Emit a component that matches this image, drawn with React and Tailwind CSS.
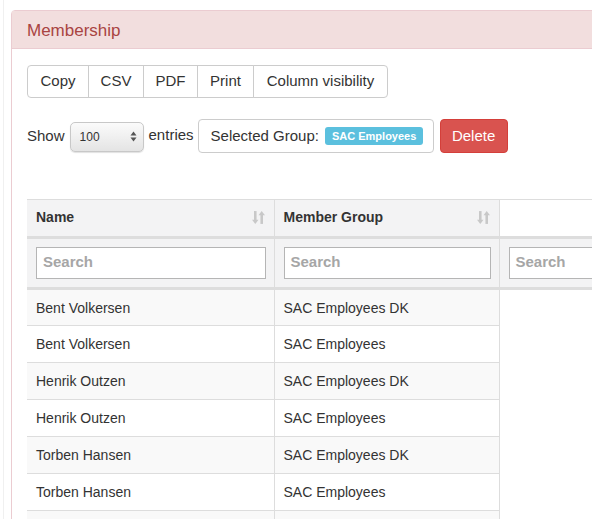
import React from "react";

const rows = [
  ["Bent Volkersen", "SAC Employees DK"],
  ["Bent Volkersen", "SAC Employees"],
  ["Henrik Outzen", "SAC Employees DK"],
  ["Henrik Outzen", "SAC Employees"],
  ["Torben Hansen", "SAC Employees DK"],
  ["Torben Hansen", "SAC Employees"],
  ["", ""],
];

function SortIcon() {
  return (
    <svg width="13" height="15" viewBox="0 0 12 14" className="text-[#c8c8c8]">
      <path d="M3 1v10" stroke="currentColor" strokeWidth="2.4" />
      <path d="M0 9l3 4 3-4z" fill="currentColor" />
      <path d="M9 13V3" stroke="currentColor" strokeWidth="2.4" />
      <path d="M6 5l3-4 3 4z" fill="currentColor" />
    </svg>
  );
}

function SearchBox({ className = "" }) {
  return (
    <div className={`flex h-[32px] items-center border border-[#b5b5b5] bg-white px-[6px] text-[15px] font-bold text-[#a6a6a6] ${className}`}>
      Search
    </div>
  );
}

export default function App() {
  const buttons = [
    ["Copy", "w-[62px]"],
    ["CSV", "w-[56px]"],
    ["PDF", "w-[55px]"],
    ["Print", "w-[57px]"],
    ["Column visibility", "w-[135px]"],
  ];

  return (
    <div className="relative h-[519px] w-[592px] overflow-hidden bg-white font-['Liberation_Sans',Arial,sans-serif] text-[14px] text-[#333]">
      <div className="absolute left-[3px] top-0 h-full w-px bg-[#f0f0f0]" />
      <div className="ml-[11px] mt-[10px] w-[640px] rounded-t-[4px] border border-[#ebccd1] bg-white">
        {/* Panel heading */}
        <div className="flex h-[38px] items-center border-b border-[#ebccd1] bg-[#f2dede] px-[15px] pt-[2px] text-[17px] text-[#a94442]">
          Membership
        </div>

        <div className="px-[15px] pt-[16px] text-[15px]">
          {/* Export buttons */}
          <div className="flex">
            {buttons.map(([label, w], i) => (
              <div
                key={label}
                className={`${w} flex h-[33px] items-center justify-center border border-[#ccc] bg-white ${
                  i === 0 ? "rounded-l-[4px]" : "-ml-px"
                } ${i === buttons.length - 1 ? "rounded-r-[4px]" : ""}`}
              >
                {label}
              </div>
            ))}
          </div>

          {/* Show entries + group */}
          <div className="mt-[21px] flex items-center">
            <span>Show</span>
            <div className="ml-[5px] mt-[1px] flex h-[30px] w-[74px] items-center justify-between rounded-[5px] border border-[#c8c8c8] bg-gradient-to-b from-[#fbfbfb] to-[#e4e4e4] pl-[9px] pr-[6px] text-[12px] shadow-[0_1px_1px_rgba(0,0,0,0.12)]">
              <span>100</span>
              <svg width="7" height="11" viewBox="0 0 7 11">
                <path d="M3.5 0.5L6.5 4.5H0.5z" fill="#555" />
                <path d="M3.5 10.5L6.5 6.5H0.5z" fill="#555" />
              </svg>
            </div>
            <span className="ml-[5px] -mt-[2px]">entries</span>
            <div className="ml-[4px] flex h-[34px] w-[236px] items-center rounded-[4px] border border-[#ccc] pl-[12px]">
              <span>Selected Group:</span>
              <span className="ml-[6px] rounded-[3px] bg-[#5bc0de] px-[7px] py-[3px] text-[11px] font-bold leading-[12px] text-white">
                SAC Employees
              </span>
            </div>
            <div className="ml-[6px] flex h-[34px] w-[68px] items-center justify-center rounded-[4px] border border-[#d43f3a] bg-[#d9534f] text-white">
              Delete
            </div>
          </div>

          {/* Table */}
          <div className="mt-[46px] border-t border-[#ddd] text-[14px]">
            <table className="w-[612px] table-fixed border-collapse">
              <colgroup>
                <col className="w-[247px]" />
                <col className="w-[225px]" />
                <col className="w-[140px]" />
              </colgroup>
              <thead>
                <tr className="h-[37px]">
                  <th className="border-r border-[#ddd] bg-[#f3f3f4] pl-[9px] pr-[9px] text-left font-bold">
                    <div className="flex items-center justify-between">
                      <span>Name</span>
                      <SortIcon />
                    </div>
                  </th>
                  <th className="border-r border-[#ddd] bg-[#f3f3f4] pl-[9px] pr-[9px] text-left font-bold">
                    <div className="flex items-center justify-between">
                      <span>Member Group</span>
                      <SortIcon />
                    </div>
                  </th>
                  <th className="bg-white" />
                </tr>
                <tr className="h-[51px] border-y-[3px] border-[#ddd] bg-[#f3f3f4]">
                  <td className="border-r border-[#ddd] pl-[9px] pr-[8px]">
                    <SearchBox />
                  </td>
                  <td className="border-r border-[#ddd] pl-[9px] pr-[8px]">
                    <SearchBox />
                  </td>
                  <td className="pl-[9px]">
                    <SearchBox className="w-[140px]" />
                  </td>
                </tr>
              </thead>
              <tbody>
                {rows.map(([name, group], i) => (
                  <tr key={i} className="h-[37px]">
                    <td className={`border-b border-r border-[#ddd] px-[9px] pt-[2px] ${i % 2 === 0 ? "bg-[#f9f9f9]" : "bg-white"}`}>
                      {name}
                    </td>
                    <td className={`border-b border-r border-[#ddd] px-[9px] pt-[2px] ${i % 2 === 0 ? "bg-[#f9f9f9]" : "bg-white"}`}>
                      {group}
                    </td>
                    <td className="bg-white" />
                  </tr>
                ))}
              </tbody>
            </table>
          </div>
        </div>
      </div>
    </div>
  );
}
